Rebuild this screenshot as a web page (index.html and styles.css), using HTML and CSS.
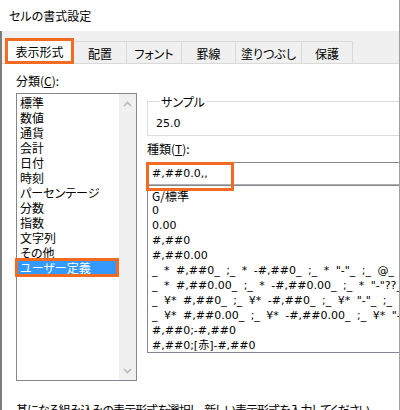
FILE: index.html
```html
<!DOCTYPE html>
<html lang="ja">
<head>
<meta charset="utf-8">
<title>セルの書式設定</title>
<link rel="stylesheet" href="styles.css">
</head>
<body>
<div class="window">
  <div class="titlebar">セルの書式設定</div>
  <div class="frame">
    <div class="tabs">
      <div class="tab active">表示形式</div>
      <div class="tab w-haichi">配置</div>
      <div class="tab w-font">フォント</div>
      <div class="tab w-keisen">罫線</div>
      <div class="tab w-nuri">塗りつぶし</div>
      <div class="tab w-hogo last">保護</div>
    </div>
    <div class="panel">
      <div class="left">
        <div class="label">分類(<u>C</u>):</div>
        <div class="catbox">
          <div class="catlist">
            <div class="row">標準</div>
            <div class="row">数値</div>
            <div class="row">通貨</div>
            <div class="row">会計</div>
            <div class="row">日付</div>
            <div class="row">時刻</div>
            <div class="row">パーセンテージ</div>
            <div class="row">分数</div>
            <div class="row">指数</div>
            <div class="row">文字列</div>
            <div class="row">その他</div>
            <div class="row selected">ユーザー定義</div>
          </div>
          <div class="scrollbar">
            <div class="sbtn">
              <svg width="9" height="6" viewBox="0 0 9 6"><polyline points="1,5 4.5,1.5 8,5" fill="none" stroke="#b8b8b8" stroke-width="1.6"/></svg>
            </div>
            <div class="strack"></div>
            <div class="sbtn">
              <svg width="9" height="6" viewBox="0 0 9 6"><polyline points="1,1 4.5,4.5 8,1" fill="none" stroke="#b8b8b8" stroke-width="1.6"/></svg>
            </div>
          </div>
        </div>
      </div>
      <div class="right">
        <fieldset class="sample">
          <legend>サンプル</legend>
          <div class="sample-val code">25.0</div>
        </fieldset>
        <div class="label type-label">種類(<u>T</u>):</div>
        <div class="typeinput code">#,##0.0,,</div>
        <div class="fmtlist code">
          <div class="row">G/標準</div>
          <div class="row">0</div>
          <div class="row">0.00</div>
          <div class="row">#,##0</div>
          <div class="row">#,##0.00</div>
          <div class="row">_ * #,##0_ ;_ * -#,##0_ ;_ * "-"_ ;_ @_</div>
          <div class="row">_ * #,##0.00_ ;_ * -#,##0.00_ ;_ * "-"??_ ;_ @_</div>
          <div class="row">_ ¥* #,##0_ ;_ ¥* -#,##0_ ;_ ¥* "-"_ ;_ @_</div>
          <div class="row">_ ¥* #,##0.00_ ;_ ¥* -#,##0.00_ ;_ ¥* "-"??_ ;_ @_</div>
          <div class="row">#,##0;-#,##0</div>
          <div class="row">#,##0;[赤]-#,##0</div>
        </div>
      </div>
      <div class="hint">基になる組み込みの表示形式を選択し、新しい表示形式を入力してください。</div>
    </div>
  </div>
</div>
</body>
</html>
```
FILE: styles.css
```css
* { box-sizing: border-box; }
html, body {
  margin: 0;
  padding: 0;
  background: #ffffff;
}
body {
  font-family: "Noto Sans CJK JP", "Noto Sans", sans-serif;
  font-size: 12px;
  line-height: 15px;
  color: #000;
  font-feature-settings: "palt";
}
.code {
  font-family: "DejaVu Sans", "Noto Sans CJK JP", sans-serif;
  font-size: 11px;
  word-spacing: 3px;
}
.window {
  width: 400px;
  height: 410px;
  overflow: hidden;
  background: #fff;
  border-right: 1px solid #a0a0a0;
  display: flex;
  flex-direction: column;
}
.titlebar {
  height: 31px;
  flex: none;
  display: flex;
  align-items: center;
  padding-left: 9px;
  padding-bottom: 1px;
  font-size: 12px;
}
.frame {
  flex: 1;
  border-left: 2px solid #7c7c7c;
  background: #f0f0f0;
  display: flex;
  flex-direction: column;
}
.tabs {
  height: 32px;
  flex: none;
  display: flex;
  align-items: flex-end;
  padding-left: 3px;
}
.tab {
  height: 22px;
  border-top: 1px solid #d9d9d9;
  border-left: 1px solid #d9d9d9;
  background: #f0f0f0;
  display: flex;
  align-items: center;
  justify-content: center;
  padding-top: 1px;
}
.tab.last { border-right: 1px solid #d9d9d9; }
.w-haichi { width: 52px; border-left: none; }
.w-font { width: 55px; }
.w-keisen { width: 54px; }
.w-nuri { width: 66px; }
.w-hogo { width: 52px; }
.tab.active {
  width: 69px;
  height: 26px;
  margin-bottom: -1px;
  background: #fff;
  border: 3px solid #f26b21;
  position: relative;
  z-index: 1;
  padding-top: 0;
}
.panel {
  flex: 1;
  background: #fff;
  border-top: 1px solid #d9d9d9;
  display: grid;
  grid-template-columns: 121px 280px;
  grid-template-rows: auto auto;
  column-gap: 10px;
  padding-left: 14px;
  align-items: start;
}
.label { height: 15px; white-space: nowrap; }
.left { padding-top: 9px; }
.catbox {
  margin-top: 5px;
  height: 288px;
  border: 1px solid #828790;
  display: flex;
}
.catlist {
  flex: 1;
  padding-top: 1px;
}
.row {
  height: 15px;
  line-height: 15px;
  white-space: nowrap;
}
.catlist .row { padding-left: 3px; }
.catlist .row.selected {
  background: #3399ff;
  color: #fff;
  position: relative;
}
.catlist .row.selected::after {
  content: "";
  position: absolute;
  left: -2px;
  right: 0;
  top: -2px;
  bottom: -2px;
  border: 3px solid #f26b21;
}
.scrollbar {
  width: 17px;
  background: #f0f0f0;
  display: flex;
  flex-direction: column;
}
.sbtn {
  height: 17px;
  display: flex;
  align-items: center;
  justify-content: center;
  padding-top: 2px;
}
.sbtn:last-child { padding-top: 0; padding-bottom: 1px; }
.strack { flex: 1; }
.right {
  padding-top: 30px;
  display: flex;
  flex-direction: column;
}
.sample {
  margin: 0;
  padding: 7px 0 4px 8px;
  border: 1px solid #dcdcdc;
  min-width: 0;
}
.sample legend {
  padding: 0 1px;
  margin-left: 4px;
  line-height: 15px;
}
.sample-val { height: 15px; line-height: 15px; }
.type-label { margin-top: 5px; }
.typeinput {
  margin-top: 6px;
  height: 23px;
  border: 1px solid #8a8a8a;
  border-bottom: 1px solid #b0b0b0;
  padding-left: 4px;
  display: flex;
  align-items: center;
  position: relative;
  white-space: nowrap;
}
.typeinput::after {
  content: "";
  position: absolute;
  left: -2px;
  top: -1px;
  width: 82px;
  height: 23px;
  border: 3px solid #f26b21;
}
.fmtlist {
  height: 168px;
  border: 1px solid #828790;
  padding-top: 2px;
  padding-left: 4px;
  overflow: hidden;
}
.fmtlist .row:first-child {
  font-family: "Noto Sans CJK JP", sans-serif;
  font-size: 12px;
  word-spacing: 0;
}
.hint {
  grid-column: 1 / 3;
  margin-top: 21px;
  white-space: nowrap;
  letter-spacing: -0.9px;
}
```
